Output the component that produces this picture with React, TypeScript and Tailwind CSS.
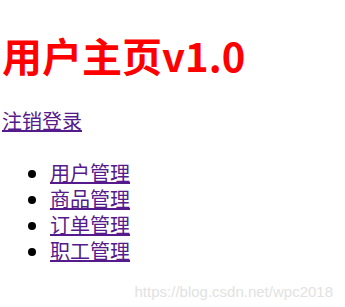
import React from 'react'

const cjk = '"Noto Sans CJK SC", "Liberation Sans", sans-serif'

export default function App() {
  const items = ['用户管理', '商品管理', '订单管理', '职工管理']

  return (
    <div className="relative w-[345px] h-[307px] bg-white overflow-hidden" style={{ fontFamily: cjk }}>
      <div className="pl-[2px] pt-[32px]">
        <h1 className="text-[40px] leading-[46px] font-bold text-[#ff0000]">用户主页v1.0</h1>

        <a href="#" className="inline-block mt-[30px] text-[20px] leading-[26px] text-[#551a8b] underline">
          注销登录
        </a>

        <ul className="mt-[26px] pl-[48px] list-disc text-[20px] leading-[26px]">
          {items.map((item) => (
            <li key={item} className="h-[26px]">
              <a href="#" className="inline-block leading-[26px] text-[#551a8b] underline">
                {item}
              </a>
            </li>
          ))}
        </ul>
      </div>

      {/* csdn watermark */}
      <div
        className="absolute right-[12px] top-[281px] text-[15px] text-[#e2e2e2]"
        style={{ fontFamily: '"Liberation Sans", Arial, sans-serif' }}
      >
        https://blog.csdn.net/wpc2018
      </div>
    </div>
  )
}
